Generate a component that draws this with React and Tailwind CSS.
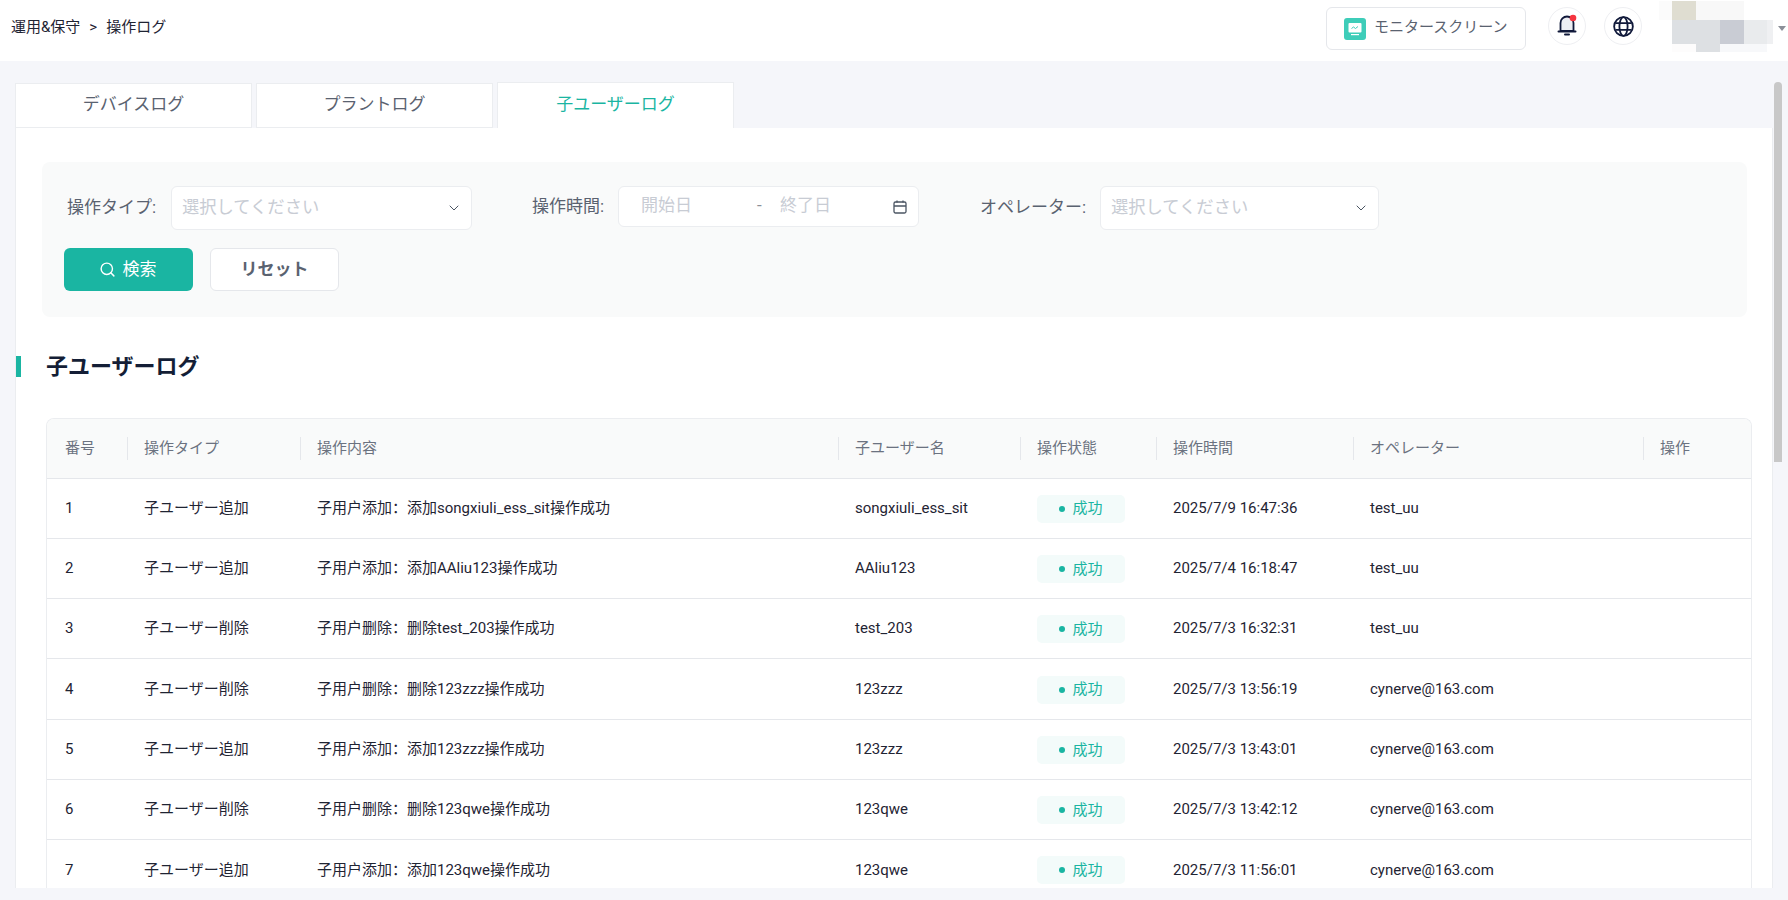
import { ChevronDown, Search } from 'lucide-react';

const rows = [
    ['1', '子ユーザー追加', '子用户添加：添加songxiuli_ess_sit操作成功', 'songxiuli_ess_sit', '2025/7/9 16:47:36', 'test_uu'],
    ['2', '子ユーザー追加', '子用户添加：添加AAliu123操作成功', 'AAliu123', '2025/7/4 16:18:47', 'test_uu'],
    ['3', '子ユーザー削除', '子用户删除：删除test_203操作成功', 'test_203', '2025/7/3 16:32:31', 'test_uu'],
    ['4', '子ユーザー削除', '子用户删除：删除123zzz操作成功', '123zzz', '2025/7/3 13:56:19', 'cynerve@163.com'],
    ['5', '子ユーザー追加', '子用户添加：添加123zzz操作成功', '123zzz', '2025/7/3 13:43:01', 'cynerve@163.com'],
    ['6', '子ユーザー削除', '子用户删除：删除123qwe操作成功', '123qwe', '2025/7/3 13:42:12', 'cynerve@163.com'],
    ['7', '子ユーザー追加', '子用户添加：添加123qwe操作成功', '123qwe', '2025/7/3 11:56:01', 'cynerve@163.com'],
];

const columns = [
    { title: '番号', width: 'w-[80px]' },
    { title: '操作タイプ', width: 'w-[173px]' },
    { title: '操作内容', width: 'w-[538px]' },
    { title: '子ユーザー名', width: 'w-[182px]' },
    { title: '操作状態', width: 'w-[136px]' },
    { title: '操作時間', width: 'w-[197px]' },
    { title: 'オペレーター', width: 'w-[290px]' },
    { title: '操作', width: 'w-[108px]' },
];

function MonitorIcon() {
    return (
        <svg width="22" height="22" viewBox="0 0 22 22" className="shrink-0">
            <rect width="22" height="22" rx="3" fill="#3ecdb9" />
            <rect x="4.5" y="5" width="13" height="9.5" rx="1" fill="#fff" />
            <rect x="7" y="16" width="8" height="1.2" fill="#fff" />
            <path d="M7.5 10.5l2-1.5 2 1.5 2.5-2" fill="none" stroke="#3ecdb9" strokeWidth="1" />
        </svg>
    );
}

function BellIcon() {
    return (
        <svg width="22" height="24" viewBox="0 0 22 24" className="-mt-[2px]">
            <path d="M4.5 18V10a6.5 6.5 0 0 1 13 0v8z" fill="#eceef3" stroke="#10193a" strokeWidth="1.8" strokeLinejoin="round" />
            <path d="M2.5 18.5h17" stroke="#10193a" strokeWidth="2" strokeLinecap="round" />
            <path d="M9 21.5h4" stroke="#10193a" strokeWidth="2" strokeLinecap="round" />
            <circle cx="17" cy="5" r="3.3" fill="#f5353f" />
        </svg>
    );
}

function GlobeIcon() {
    return (
        <svg width="21" height="21" viewBox="0 0 22 22" fill="none" stroke="#10193a" strokeWidth="1.9">
            <circle cx="11" cy="11" r="9.8" />
            <ellipse cx="11" cy="11" rx="4.3" ry="9.8" />
            <path d="M2.5 7.5h17M2.5 14.5h17" />
        </svg>
    );
}

function CalendarIcon() {
    return (
        <svg width="14" height="14" viewBox="0 0 14 14" fill="none" stroke="#4b5563" strokeWidth="1.3">
            <rect x="1" y="2" width="12" height="11" rx="1.5" />
            <path d="M1 6h12M4 0.5v2M10 0.5v2" />
        </svg>
    );
}

// 打码的头像区域
function BlurredAvatar() {
    return (
        <svg width="114" height="52" viewBox="0 0 114 52" className="shrink-0">
            <rect x="0" y="1" width="13" height="19" fill="#fbfbfb" />
            <rect x="13" y="1" width="24" height="19" fill="#dfddd1" />
            <rect x="37" y="1" width="48" height="19" fill="#f8f8f8" />
            <rect x="13" y="20" width="48" height="24" fill="#dde0e3" />
            <rect x="61" y="20" width="24" height="24" fill="#c9ccd4" />
            <rect x="85" y="20" width="23" height="24" fill="#e9ebed" />
            <rect x="108" y="20" width="6" height="24" fill="#eff0f2" />
            <rect x="13" y="44" width="24" height="8" fill="#fdfcfc" />
            <rect x="37" y="44" width="24" height="8" fill="#dde0e3" />
            <rect x="61" y="44" width="47" height="8" fill="#f7f8fa" />
        </svg>
    );
}

function SelectBox({ width }) {
    return (
        <div className={`${width} h-[44px] bg-white border border-[#ebedf0] rounded-md pl-[10px] pr-[9px] flex items-center justify-between`}>
            <span className="text-[17.3px] text-[#c8ccd4]">選択してください</span>
            <ChevronDown size={16} color="#4b5563" strokeWidth={1.5} />
        </div>
    );
}

function StatusBadge() {
    return (
        <div className="mt-[1px] w-[88px] h-[28px] bg-[#f3fbfa] rounded-[5px] flex items-center justify-center gap-[7px] text-[15px] text-[#1ab5a2]">
            <span className="w-[6px] h-[6px] rounded-full bg-[#1ab5a2]"></span>
            成功
        </div>
    );
}

export default function App() {
    return (
        <div className="relative h-[900px] overflow-hidden bg-[#f5f6fa] font-[Roboto,'Noto_Sans_CJK_SC',sans-serif] text-[15px] text-[#1f2433]">
            {/* 顶部栏 */}
            <header className="h-[61px] bg-white flex items-start pl-[11px]">
                <div className="mt-[16px] leading-[22px] flex gap-[9px]">
                    <span>運用&保守</span>
                    <span>&gt;</span>
                    <span>操作ログ</span>
                </div>
                <div className="ml-auto flex items-start">
                    <button className="mt-[7px] w-[200px] h-[43px] border border-[#e5e7eb] rounded-md flex items-center pl-[17px] gap-[8px] text-[#5a6270]">
                        <MonitorIcon />
                        <span className="pb-[2px]">モニタースクリーン</span>
                    </button>
                    <div className="mt-[7px] ml-[22px] w-[38px] h-[38px] rounded-full border border-[#eeeff2] flex items-center justify-center">
                        <BellIcon />
                    </div>
                    <div className="mt-[7px] ml-[18px] w-[38px] h-[38px] rounded-full border border-[#eeeff2] flex items-center justify-center">
                        <GlobeIcon />
                    </div>
                    <div className="ml-[17px]">
                        <BlurredAvatar />
                    </div>
                    <div className="mt-[26px] ml-[5px] w-0 h-0 border-x-[4px] border-x-transparent border-t-[5px] border-t-[#8b8f98]"></div>
                    <div className="w-[2px]"></div>
                </div>
            </header>

            <main className="h-[827px] overflow-hidden pl-[15px] pr-[15px] pt-[21px]">
                {/* 标签页 */}
                <div className="flex items-end gap-[4px] h-[46px]">
                    <div className="w-[237px] h-[45px] pb-[2px] bg-white border border-[#ebedf0] flex items-center justify-center text-[17px] text-[#5a6270]">デバイスログ</div>
                    <div className="w-[237px] h-[45px] pb-[2px] bg-white border border-[#ebedf0] flex items-center justify-center text-[17px] text-[#5a6270]">プラントログ</div>
                    <div className="w-[237px] h-[46px] pb-[2px] bg-white border border-b-0 border-[#ebedf0] flex items-center justify-center text-[17px] text-[#1ab5a2]">子ユーザーログ</div>
                </div>

                <div className="h-[800px] bg-white border-x border-[#ebedf0] pt-[34px]">
                    {/* 筛选区域 */}
                    <div className="ml-[26px] w-[1705px] h-[155px] bg-[#f9fafa] rounded-lg pt-[24px] pl-[22px]">
                        <div className="flex items-start">
                            <div className="flex items-center ml-[3px] text-[#5a6270]">
                                <span className="w-[104px] text-[17px]">操作タイプ:</span>
                                <SelectBox width="w-[301px]" />
                            </div>
                            <div className="flex items-center ml-[60px] text-[#5a6270]">
                                <span className="w-[86px] text-[17px]">操作時間:</span>
                                <div className="w-[301px] h-[41px] bg-white border border-[#ebedf0] rounded-md flex items-center text-[17px] text-[#c8ccd4] pl-[22px]">
                                    <span className="w-[116px] pb-[1px]">開始日</span>
                                    <span className="w-[23px] pb-[1px] text-[#8b8f98]">-</span>
                                    <span className="w-[113px] pb-[1px]">終了日</span>
                                    <CalendarIcon />
                                </div>
                            </div>
                            <div className="flex items-center ml-[61px] text-[#5a6270]">
                                <span className="w-[120px] text-[17px]">オペレーター:</span>
                                <SelectBox width="w-[279px]" />
                            </div>
                        </div>
                        <div className="mt-[18px] flex gap-[17px]">
                            <button className="w-[129px] h-[43px] pr-[2px] bg-[#1ab5a2] rounded-md flex items-center justify-center gap-[7px] text-[17px] text-white">
                                <Search size={17} color="#fff" strokeWidth={2} />
                                検索
                            </button>
                            <button className="w-[129px] h-[43px] bg-white border border-[#e5e7eb] rounded-md text-[17px] font-bold text-[#5a6270]">リセット</button>
                        </div>
                    </div>

                    {/* 标题 */}
                    <div className="mt-[39px] h-[21px] border-l-[5px] border-[#1ab5a2] pl-[25px] flex items-center text-[22px] font-bold text-[#141e36]">
                        子ユーザーログ
                    </div>

                    {/* 表格 */}
                    <div className="mt-[41px] ml-[30px] w-[1706px] border-x border-t border-[#ebedf0] rounded-t-lg overflow-hidden">
                        <table className="w-full table-fixed border-collapse">
                            <thead>
                                <tr className="h-[59px] bg-[#f9fafa] border-b border-[#e5e7eb]">
                                    {columns.map((col, i) => (
                                        <th key={col.title} className={`${col.width} p-0 font-normal text-left text-[#6b7280]`}>
                                            <div className={`h-[23px] flex items-center ${i > 0 ? 'pl-[16px] border-l border-[#e5e7eb]' : 'pl-[18px]'}`}>{col.title}</div>
                                        </th>
                                    ))}
                                </tr>
                            </thead>
                            <tbody>
                                {rows.map((row) => (
                                    <tr key={row[0]} className="h-[60.3px] border-b border-[#e5e7eb]">
                                        <td className="p-0 pl-[18px]">{row[0]}</td>
                                        <td className="p-0 pl-[17px]">{row[1]}</td>
                                        <td className="p-0 pl-[17px]">{row[2]}</td>
                                        <td className="p-0 pl-[17px]">{row[3]}</td>
                                        <td className="p-0 pl-[17px]"><StatusBadge /></td>
                                        <td className="p-0 pl-[17px]">{row[4]}</td>
                                        <td className="p-0 pl-[17px]">{row[5]}</td>
                                        <td className="p-0"></td>
                                    </tr>
                                ))}
                            </tbody>
                        </table>
                    </div>
                </div>
            </main>

            <div className="h-[12px]"></div>

            {/* 滚动条 */}
            <div className="absolute left-[1774px] top-[82px] w-[8px] h-[380px] bg-[#c8c8c8] rounded-t"></div>
        </div>
    );
}
